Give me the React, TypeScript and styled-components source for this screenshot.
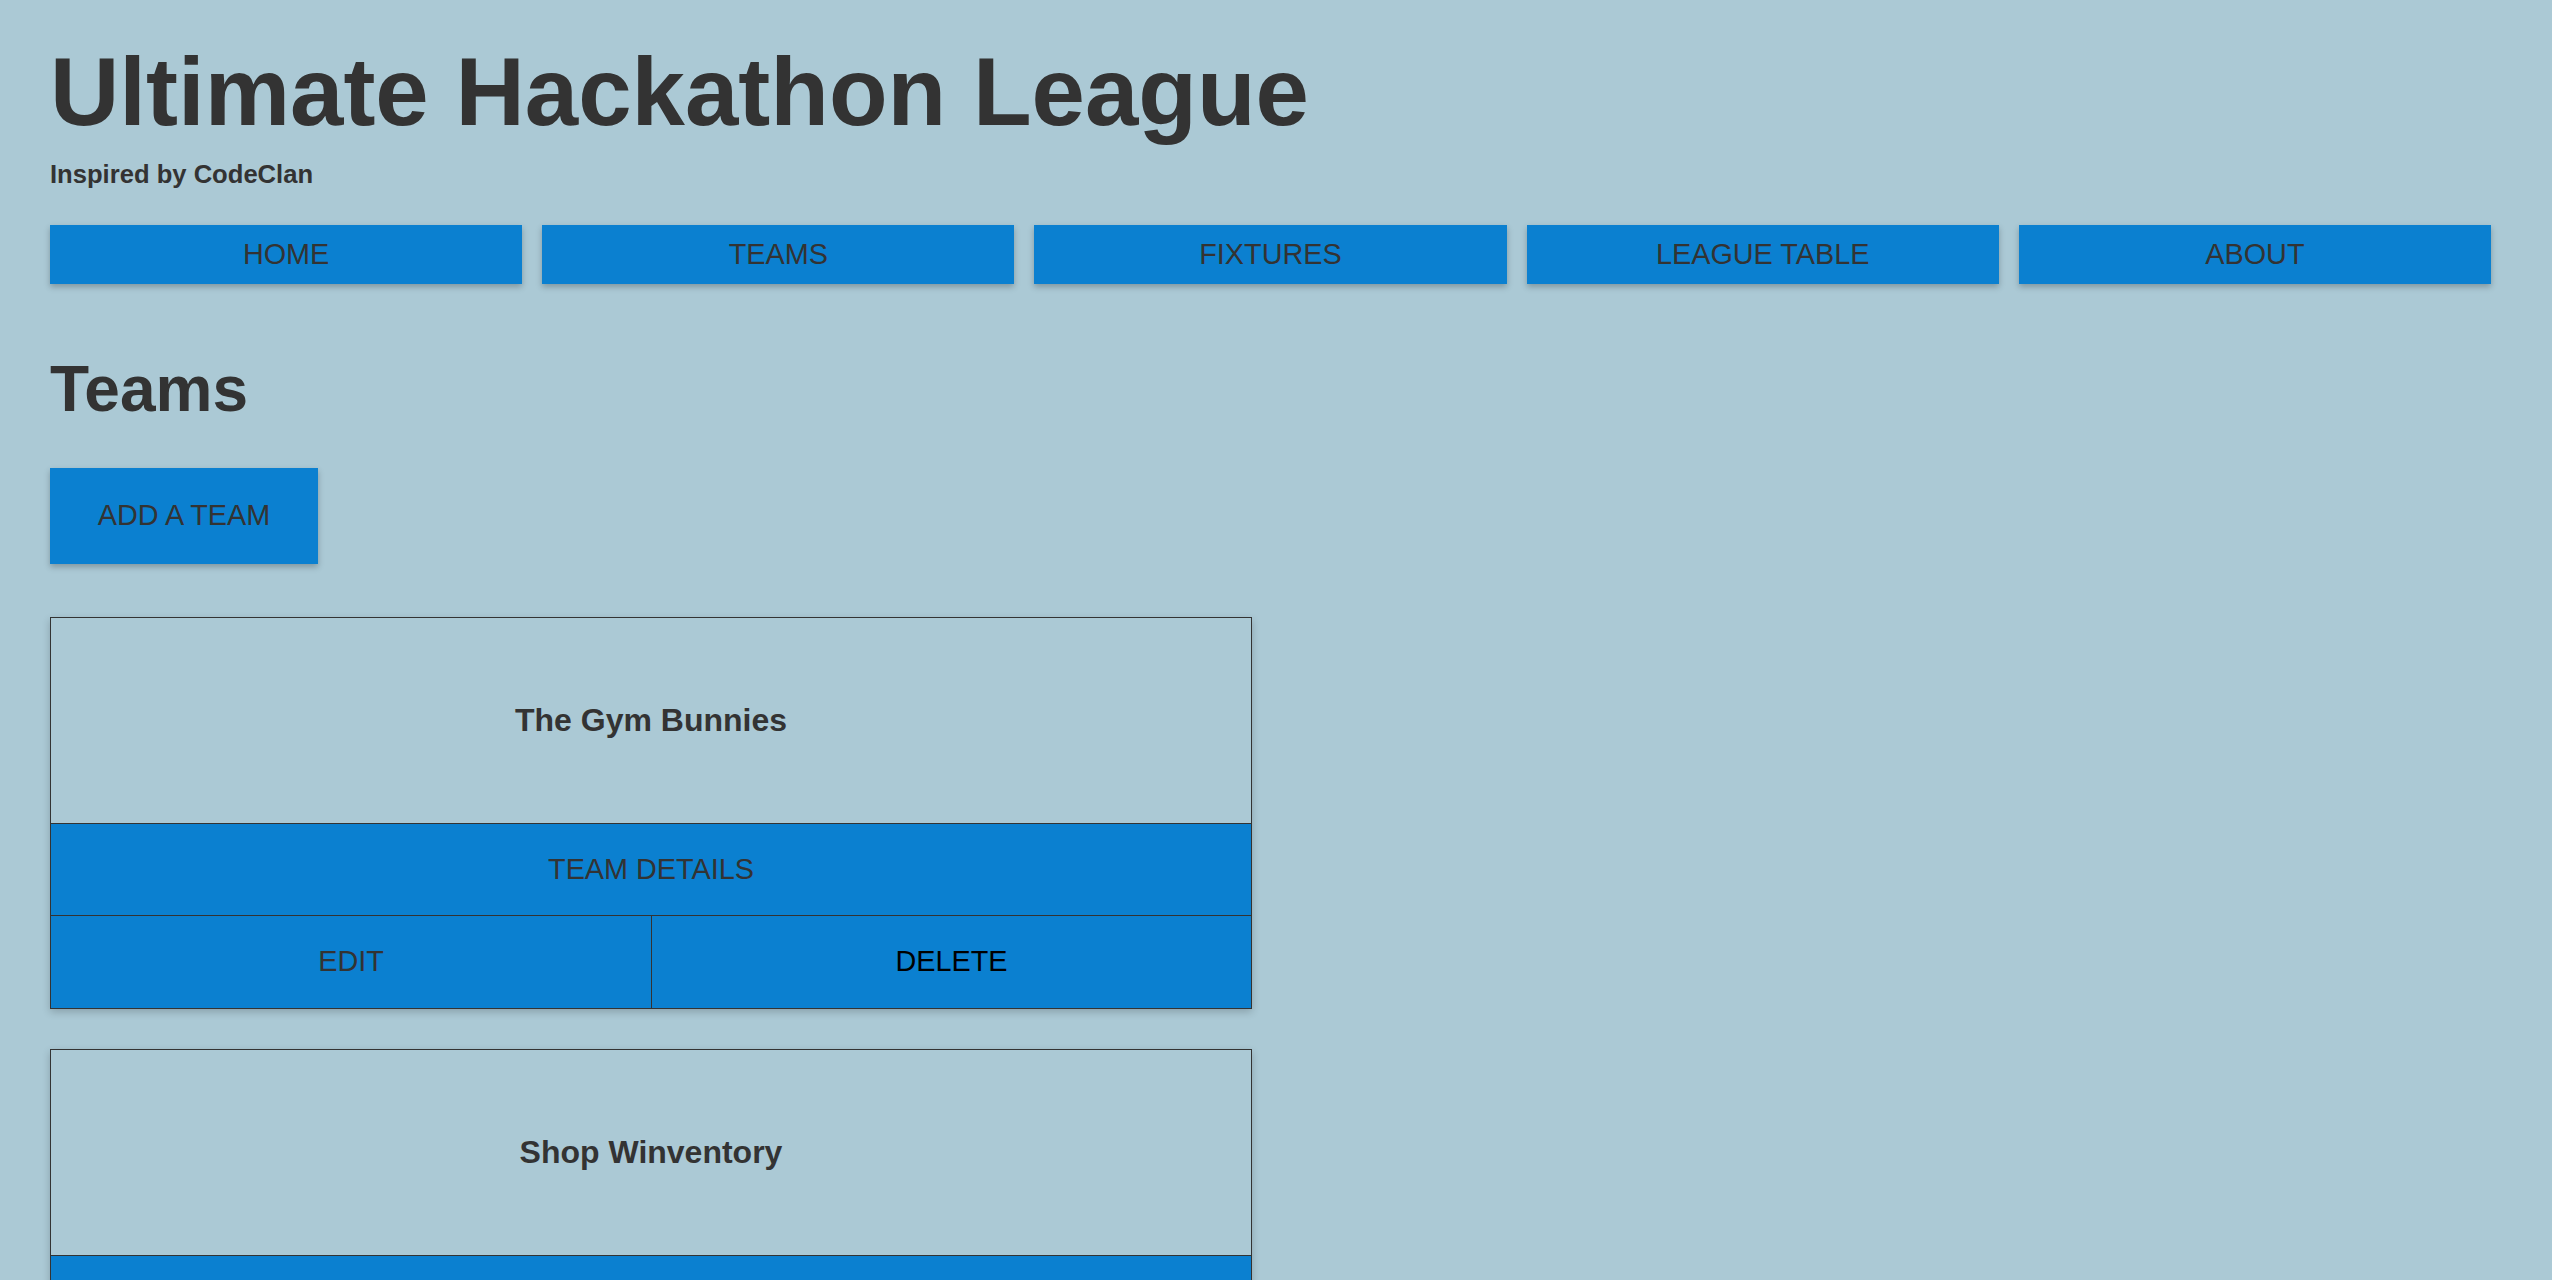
import styled, { createGlobalStyle } from "styled-components"

const teams = ["The Gym Bunnies", "Shop Winventory"]
const links = ["HOME", "TEAMS", "FIXTURES", "LEAGUE TABLE", "ABOUT"]

const App = () => {
  return (
    <>
      <GlobalStyle />
      <Page>
        <Title>Ultimate Hackathon League</Title>
        <Sub>Inspired by CodeClan</Sub>
        <Nav>
          {links.map((l) => (
            <NavButton key={l}>{l}</NavButton>
          ))}
        </Nav>
        <Heading>Teams</Heading>
        <AddButton>ADD A TEAM</AddButton>
        <CardList>
          {teams.map((t) => (
            <Card key={t}>
              <CardName>{t}</CardName>
              <Details>TEAM DETAILS</Details>
              <Actions>
                <Action>EDIT</Action>
                <Action danger>DELETE</Action>
              </Actions>
            </Card>
          ))}
        </CardList>
      </Page>
    </>
  )
}
export default App

const GlobalStyle = createGlobalStyle`
  html, body {
    margin: 0;
    padding: 0;
    background-color: #abc9d5;
  }
  body {
    font-family: "Liberation Sans", Arial, sans-serif;
    color: #333;
  }
`
const Page = styled.div`
  padding: 44px 61px 0 50px;
  min-height: 1280px;
  box-sizing: border-box;
`
const Title = styled.h1`
  margin: 0;
  font-size: 96px;
  line-height: 1;
  font-weight: bold;
  color: #333;
`
const Sub = styled.h4`
  margin: 22px 0 0 0;
  font-size: 25.6px;
  line-height: 1;
  font-weight: bold;
  color: #333;
`
const Nav = styled.nav`
  margin-top: 37px;
  display: grid;
  grid-template-columns: repeat(5, 1fr);
  gap: 20px;
`
const NavButton = styled.div`
  height: 59px;
  background-color: #0b80d0;
  color: #333;
  font-size: 28.8px;
  display: flex;
  justify-content: center;
  align-items: center;
  box-shadow: 0 3px 6px rgba(0, 0, 0, 0.25);
  cursor: pointer;
`
const Heading = styled.h2`
  margin: 73px 0 0 0;
  font-size: 64px;
  line-height: 1;
  font-weight: bold;
  color: #333;
`
const AddButton = styled.div`
  margin-top: 47px;
  width: 268px;
  height: 96px;
  background-color: #0b80d0;
  color: #333;
  font-size: 28.8px;
  display: flex;
  justify-content: center;
  align-items: center;
  box-shadow: 0 3px 6px rgba(0, 0, 0, 0.25);
  cursor: pointer;
`
const CardList = styled.div`
  margin-top: 53px;
  display: flex;
  flex-direction: column;
  gap: 40px;
`
const Card = styled.div`
  width: 1202px;
  box-sizing: border-box;
  border: 1px solid #333;
  box-shadow: 0 3px 8px rgba(0, 0, 0, 0.2);
`
const CardName = styled.div`
  height: 205px;
  display: flex;
  justify-content: center;
  align-items: center;
  font-size: 32px;
  font-weight: bold;
  color: #333;
`
const Details = styled.div`
  height: 91px;
  border-top: 1px solid #333;
  background-color: #0b80d0;
  display: flex;
  justify-content: center;
  align-items: center;
  font-size: 28.8px;
  color: #333;
  cursor: pointer;
`
const Actions = styled.div`
  display: grid;
  grid-template-columns: 1fr 1fr;
  border-top: 1px solid #333;
`
const Action = styled.div<{ danger?: boolean }>`
  height: 92px;
  background-color: #0b80d0;
  display: flex;
  justify-content: center;
  align-items: center;
  font-size: 28.8px;
  color: ${({ danger }) => (danger ? "#000" : "#333")};
  & + & {
    border-left: 1px solid #333;
  }
  cursor: pointer;
`
